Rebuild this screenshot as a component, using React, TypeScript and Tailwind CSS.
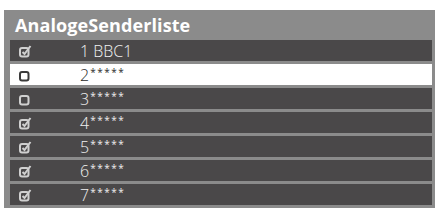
const channels = [
  { num: "1", name: " BBC1", checked: true },
  { num: "2", name: "*****", checked: false },
  { num: "3", name: "*****", checked: false },
  { num: "4", name: "*****", checked: true },
  { num: "5", name: "*****", checked: true },
  { num: "6", name: "*****", checked: true },
  { num: "7", name: "*****", checked: true },
];

function CheckIcon({ checked, dark }: { checked: boolean; dark: boolean }) {
  const c = dark ? "#3a3a3a" : "#d0d0d0";
  return (
    <svg width="14" height="14" viewBox="0 0 14 14">
      <rect x="2" y="4" width="8.5" height="8.5" rx="2" fill="none" stroke={c} strokeWidth="2" />
      {checked && <path d="M4.5 8 L6.5 10 L12.5 2" fill="none" stroke={c} strokeWidth="2" />}
    </svg>
  );
}

export default function App() {
  return (
    <div className="h-[209px] w-[437px] bg-white pl-[4px] pt-[10px]" style={{ fontFamily: '"Open Sans", sans-serif' }}>
      <div className="h-[198px] w-[431px] bg-[#8b8b8b] pl-[6px] pr-[3px]">
        <div className="flex h-[30px] items-center pl-[5px] text-[18px] font-bold tracking-[0.1px] text-white">AnalogeSenderliste</div>
        <div className="flex flex-col gap-[3px]">
          {channels.map((ch, i) => {
            const selected = i === 1;
            return (
              <div
                key={ch.num}
                className={`flex h-[21px] items-center ${selected ? "bg-white text-[#2a2a2a]" : "bg-[#4a4849] text-[#f0f0f0]"}`}
              >
                <div className="flex w-[70px] pl-[8px]">
                  <CheckIcon checked={ch.checked} dark={selected} />
                </div>
                <span className="text-[16px] font-light leading-none">{ch.num}</span>
                {ch.name === " BBC1" ? (
                  <span className="text-[16px] font-light leading-none">&nbsp;BBC1</span>
                ) : (
                  <span className="self-start pl-[1px] pt-[3px] text-[10px] leading-none tracking-[1.5px]">{ch.name}</span>
                )}
              </div>
            );
          })}
        </div>
      </div>
    </div>
  );
}
